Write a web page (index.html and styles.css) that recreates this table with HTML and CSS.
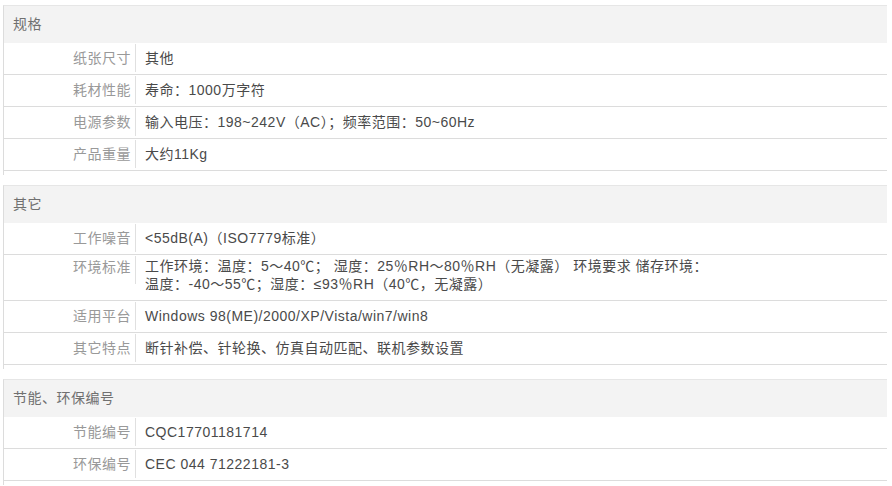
FILE: index.html
```html
<!DOCTYPE html>
<html lang="zh-CN">
<head>
<meta charset="utf-8">
<title>规格参数</title>
<link rel="stylesheet" href="styles.css">
</head>
<body>
<div class="spec">
  <section class="group">
    <h3 class="group-title">规格</h3>
    <dl class="row"><dt>纸张尺寸</dt><dd>其他</dd></dl>
    <dl class="row"><dt>耗材性能</dt><dd>寿命：1000万字符</dd></dl>
    <dl class="row"><dt>电源参数</dt><dd>输入电压：198~242V（AC）；频率范围：50~60Hz</dd></dl>
    <dl class="row"><dt>产品重量</dt><dd>大约11Kg</dd></dl>
  </section>
  <section class="group">
    <h3 class="group-title">其它</h3>
    <dl class="row"><dt>工作噪音</dt><dd>&lt;55dB(A)（ISO7779标准）</dd></dl>
    <dl class="row row-multi"><dt>环境标准</dt><dd>工作环境：温度：5～40℃； 湿度：25％RH～80％RH（无凝露） 环境要求 储存环境：<br>温度：-40～55℃；湿度：≤93％RH（40℃，无凝露）</dd></dl>
    <dl class="row"><dt>适用平台</dt><dd>Windows 98(ME)/2000/XP/Vista/win7/win8</dd></dl>
    <dl class="row"><dt>其它特点</dt><dd>断针补偿、针轮换、仿真自动匹配、联机参数设置</dd></dl>
  </section>
  <section class="group">
    <h3 class="group-title">节能、环保编号</h3>
    <dl class="row"><dt>节能编号</dt><dd>CQC17701181714</dd></dl>
    <dl class="row"><dt>环保编号</dt><dd>CEC 044 71222181-3</dd></dl>
  </section>
</div>
</body>
</html>
```

FILE: styles.css
```css
body {
  margin: 0;
  background: #fff;
  font-family: "Liberation Sans", "Noto Sans CJK SC", sans-serif;
  font-size: 14px;
}

.spec {
  padding: 5px 5px 0 3px;
}

.group {
  border-left: 1px solid #dcdcdc;
  border-top: 1px solid #e6e6e6;
  padding-bottom: 4px;
  margin-bottom: 10px;
}

.group-title {
  margin: 0;
  height: 37px;
  line-height: 37px;
  padding-left: 9px;
  background: #f3f3f3;
  color: #707070;
  font-size: 14px;
  font-weight: normal;
  letter-spacing: 0.5px;
}

.row {
  display: flex;
  align-items: flex-start;
  margin: 0;
  min-height: 31px;
  border-bottom: 1px solid #dcdcdc;
  letter-spacing: 0.5px;
}

.row dt {
  box-sizing: border-box;
  flex: none;
  width: 132px;
  height: 28px;
  margin-top: 1px;
  padding-right: 4px;
  line-height: 28px;
  text-align: right;
  color: #999;
  border-right: 1px solid #e0e0e0;
}

.row dd {
  margin: 0;
  padding: 6px 0 7px 9px;
  line-height: 18px;
  color: #4a4a4a;
}

.row-multi dt {
  line-height: 22px;
}

.row-multi dd {
  padding-top: 2px;
}
```
